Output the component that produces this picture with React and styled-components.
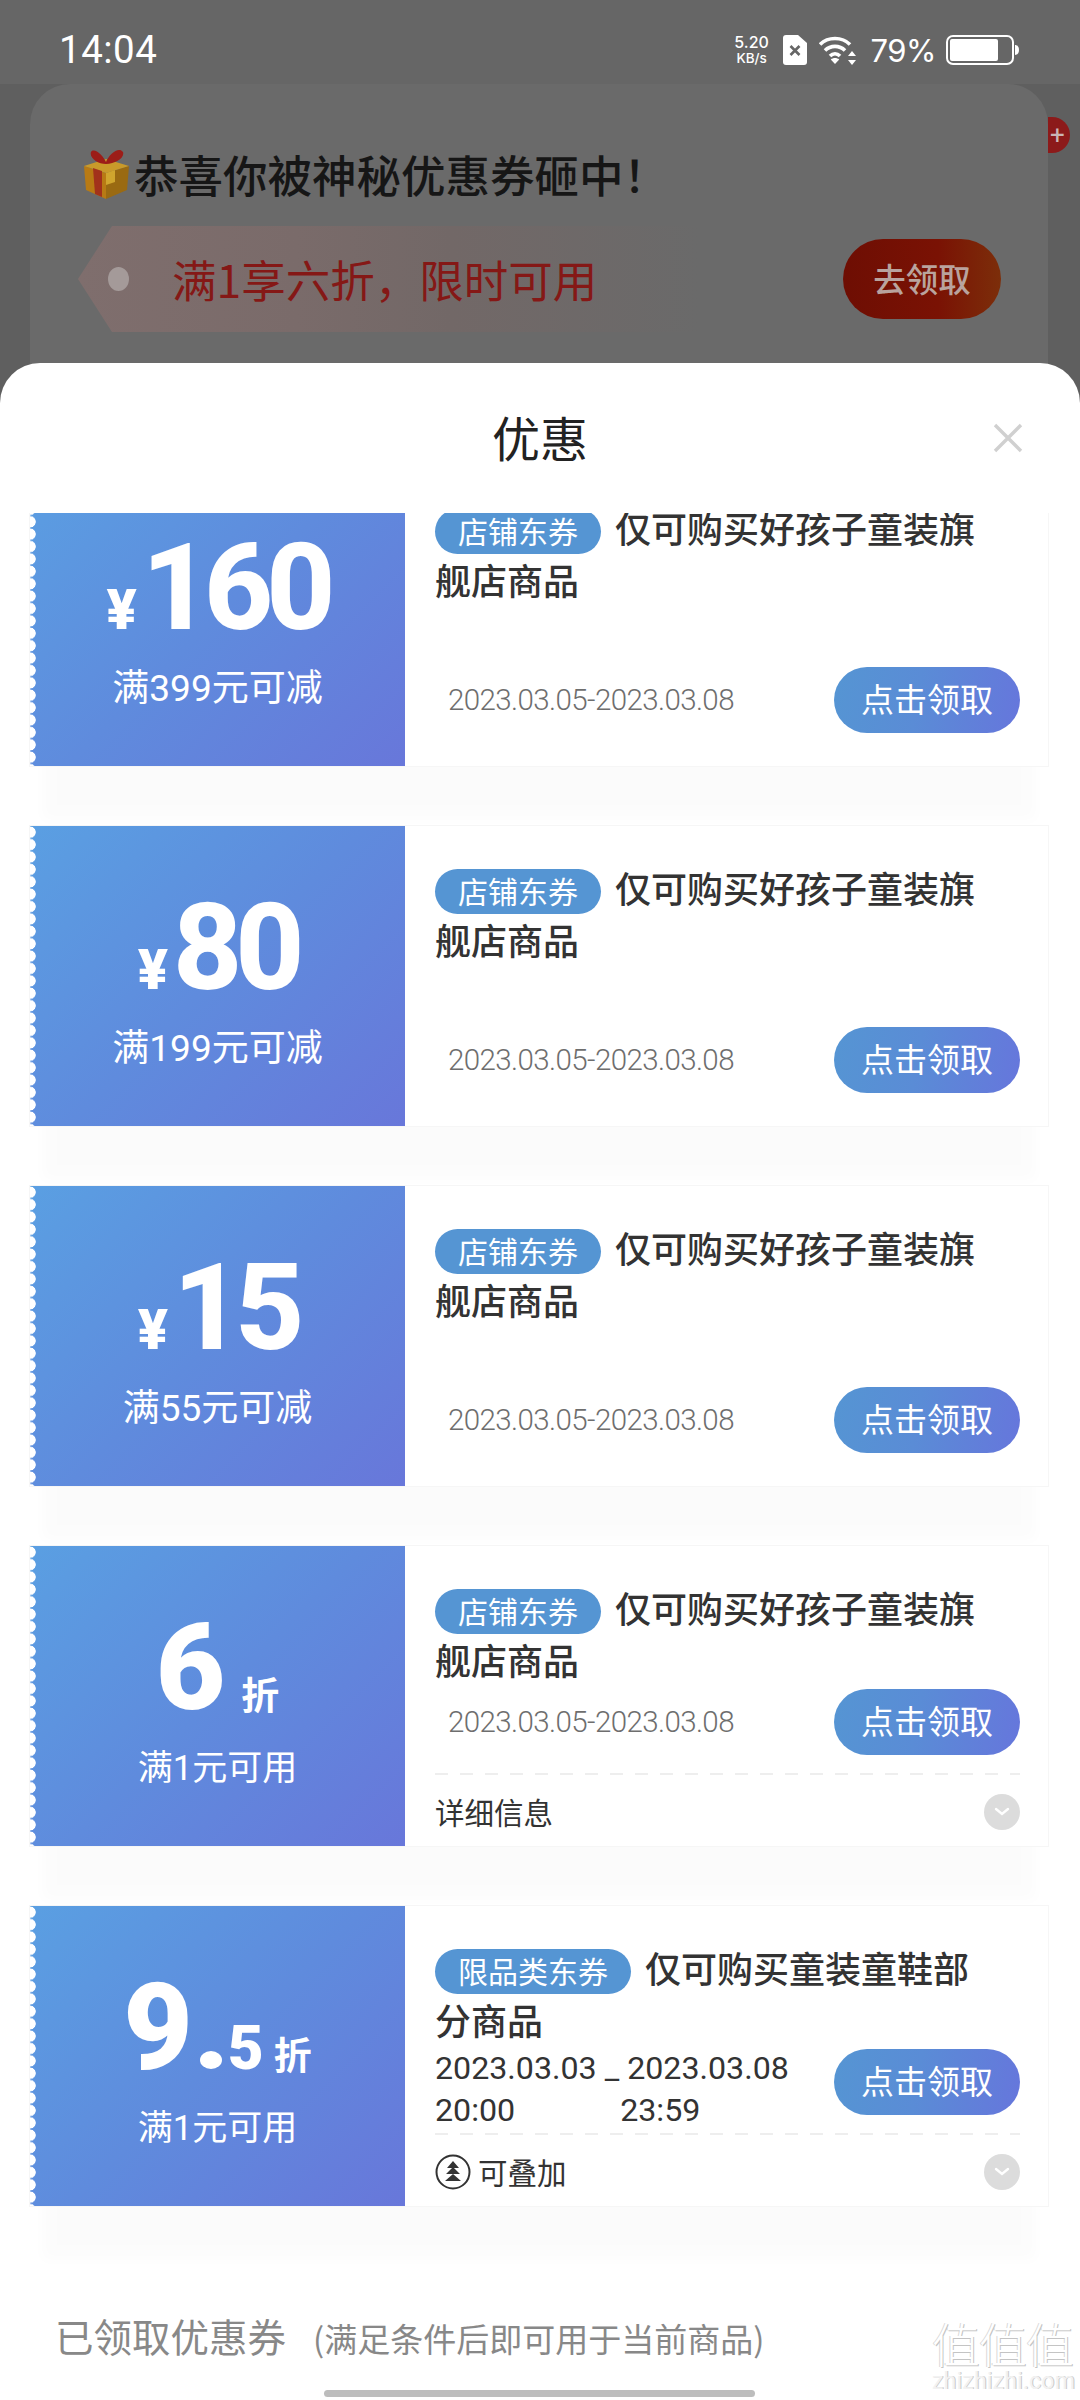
import React from "react";
import styled, { createGlobalStyle } from "styled-components";

const Global = createGlobalStyle`
  html, body { margin: 0; padding: 0; background: #fff; }
  * { box-sizing: border-box; }
  body { font-family: Roboto, "Noto Sans CJK SC", sans-serif; }
`;

const Page = styled.div`
  width: 1080px; height: 2400px; overflow: hidden; display: flex; flex-direction: column;
  position: relative; background: #5f5f5f;
`;
const Backdrop = styled.div`
  flex: 0 0 403px; display: flex; flex-direction: column; background: #5f5f5f;
`;
const StatusBar = styled.div`
  flex: 0 0 84px; display: flex; align-items: center; justify-content: space-between;
  padding: 16px 61px 0 59px; background: #666; color: #fff;
  position: relative; z-index: 1;
`;
const Clock = styled.div`font: 400 38.5px/1 Roboto, sans-serif; letter-spacing: 0.5px;`;
const StatusIcons = styled.div`display: flex; align-items: center;`;
const Speed = styled.div`
  display: flex; flex-direction: column; align-items: center; width: 40px; font-family: Inter, sans-serif;
  font-weight: 500; margin-right: 11px;
  span:first-child { font-size: 16px; line-height: 17px; }
  span:last-child { font-size: 13.5px; line-height: 15px; }
`;
const Percent = styled.div`font: 400 31px/1 Inter, sans-serif; margin: 0 10px 0 14px; letter-spacing: -0.5px;`;
const BackCard = styled.div`
  flex: 1; margin: 0 32px 0 30px; background: #6a6a6a; border-radius: 40px 40px 0 0;
  padding: 64px 0 0 54px; position: relative;
`;
const PlusBadge = styled.div`
  position: absolute; left: 100%; top: 33px; width: 22px; height: 36px; background: #8c1a1a;
  border-radius: 0 18px 18px 0; color: #c9b5b5; font: 400 26px/36px Roboto, sans-serif; padding-left: 2px;
`;
const Headline = styled.div`
  display: flex; align-items: center; height: 52px; font: 500 44.5px/52px "Noto Sans CJK SC", sans-serif; color: #161616;
  svg { margin-right: 5px; }
`;
const Offer = styled.div`display: flex; align-items: center; margin-top: 26px; height: 106px; margin-right: 47px; position: relative;`;
const OfferTag = styled.div`
  flex: 0 0 622px; margin-left: -6px; height: 106px; display: flex; align-items: center; padding-left: 94px;
  background: linear-gradient(90deg, #7f6e6d 0%, #7a6b6a 35%, #726867 60%, #6a6a6a 100%);
  clip-path: polygon(34px 0, 100% 0, 100% 100%, 34px 100%, 0 50%);
  position: relative;
  color: #851816; font: 400 44.5px/1 "Noto Sans CJK SC", sans-serif; white-space: nowrap;
  &::before { content: ""; position: absolute; left: 30px; top: 41px; width: 21px; height: 24px; border-radius: 50%; background: #a49a99; }
`;
const OfferButton = styled.div`
  margin-left: auto; width: 158px; height: 80px; border-radius: 40px;
  background: linear-gradient(90deg, #6e0e03 0%, #7a1204 60%, #7c2e0a 100%);
  color: #b9a39e; font: 500 32.5px/78px "Noto Sans CJK SC", sans-serif; text-align: center;
`;

const Sheet = styled.div`
  flex: 1; margin-top: -40px; background: #fff; border-radius: 40px 40px 0 0; position: relative;
  display: flex; flex-direction: column; min-height: 0;
`;
const SheetHead = styled.div`
  flex: 0 0 150px; display: flex; align-items: center; justify-content: center; position: relative;
  padding-bottom: 5px; font: 400 48px/1 "Noto Sans CJK SC", sans-serif; color: #222;
`;
const Close = styled.svg`position: absolute; right: 57px; top: 60px;`;
const Viewport = styled.div`flex: 1; min-height: 0; overflow: hidden; padding: 0 32px 0 30px;`;
const List = styled.div`display: flex; flex-direction: column; gap: 60px; margin-top: -47px;`;
const Card = styled.div`
  height: 300px; display: grid; grid-template-columns: 375px 1fr; grid-template-rows: 300px; background: #fff;
  box-shadow: 0 0 0 1px #f6f6f6, 0 66px 12px -12px rgba(0,0,0,0.017);
`;
const Stub = styled.div`
  position: relative; background: linear-gradient(135deg, #5a9fe2 0%, #5f8bdd 50%, #6877da 100%);
  display: flex; flex-direction: column; align-items: center; padding-top: 62px; color: #fff;
  &::before {
    content: ""; position: absolute; left: 0; top: 0; bottom: 0; width: 8px;
    background: radial-gradient(circle at 0 50%, #fff 5.4px, transparent 6px) 0 0 / 8px 12.4px repeat-y;
  }
`;
const Amount = styled.div`display: flex; align-items: baseline; height: 120px; line-height: 120px; white-space: nowrap;`;
const Yen = styled.span`font: 900 56px/1 Roboto, sans-serif; margin-right: 5px;`;
const Digits = styled.span`font: 800 120px/120px Roboto, sans-serif; letter-spacing: -7px;`;
const Whole = styled.span`font: 900 120px/120px Roboto, sans-serif;`;
const Dot = styled.span`
  display: inline-block; width: 22px; height: 18px; border-radius: 50%; background: #fff; margin: 0 6px 0 7px;
`;
const Frac = styled.span`font: 900 62px/120px Roboto, sans-serif;`;
const Zhe = styled.span`font: 700 38px/1 "Noto Sans CJK SC", sans-serif; margin-left: ${p => p.$gap}px;`;
const Condition = styled.div`
  margin-top: 19px; font: 400 ${p => p.$size}px/44px Roboto, "Noto Sans CJK SC", sans-serif; white-space: nowrap;
`;
const Body = styled.div`padding: 40px 28px 0 30px; display: flex; flex-direction: column; min-width: 0;`;
const Title = styled.div`
  height: 104px; margin: -5px 0 4px; padding-right: 25px; font: 500 36px/52px "Noto Sans CJK SC", sans-serif; color: #333;
`;
const Tag = styled.span`
  display: inline-block; height: 45px; padding: 0 23px; margin: -6px 14px -6px 0; border-radius: 23px;
  background: #5595d3; color: #fff; font: 400 30px/43px "Noto Sans CJK SC", sans-serif; vertical-align: 0;
`;
const Action = styled.div`
  height: 66px; display: flex; justify-content: space-between; align-items: center;
  margin-top: ${p => (p.$tall ? 58 : 0)}px;
`;
const Date = styled.div`
  margin-left: 13px; padding-top: 2px; font: 300 29.5px/1 Roboto, sans-serif; letter-spacing: -0.6px; color: #6e6e6e; white-space: nowrap;
`;
const DateTwoLine = styled.div`
  align-self: flex-start; margin-top: -2px; font: 400 32.2px/42px Roboto, sans-serif; color: #333; white-space: nowrap;
`;
const TimeEnd = styled.span`margin-left: 105px;`;
const Claim = styled.div`
  flex: 0 0 186px; height: 66px; border-radius: 33px; background: linear-gradient(100deg, #5595d3 0%, #5a8cd6 45%, #6676dc 100%);
  color: #fff; font: 400 33px/62px "Noto Sans CJK SC", sans-serif; text-align: center;
`;
const Foot = styled.div`
  margin-top: 18px; height: 73px; padding-top: 5px; display: flex; align-items: center;
  background: repeating-linear-gradient(90deg, #eeeeee 0 13px, transparent 13px 25px) top / 100% 2px no-repeat;
  font: 400 29.5px/1 "Noto Sans CJK SC", sans-serif; color: #333;
`;
const FootLabel = styled.span`flex: 1; display: flex; align-items: center; gap: 7px;`;
const Expand = styled.span`
  width: 36px; height: 36px; border-radius: 50%; background: #dcdcdc; display: flex; align-items: center; justify-content: center;
`;
const Received = styled.div`
  flex: 0 0 90px; padding: 0 0 0 55px; color: #888; display: flex; align-items: baseline; white-space: nowrap;
  font-family: "Noto Sans CJK SC", sans-serif;
`;
const ReceivedTitle = styled.span`font-size: 38.5px; line-height: 50px; margin-right: 27px;`;
const ReceivedNote = styled.span`font-size: 33px; line-height: 50px;`;
const HomeBar = styled.div`
  position: absolute; left: 324px; bottom: 3px; width: 431px; height: 7px; border-radius: 4px; background: #bdbdbd;
`;
const Watermark = styled.div`
  position: absolute; right: 8px; bottom: 4px; width: 140px; text-align: center; color: #fff;
  font-family: "Noto Sans CJK SC", sans-serif;
`;
const MarkChars = styled.div`
  font-size: 48px; line-height: 52px; font-weight: 300; white-space: nowrap; letter-spacing: -1px;
  text-shadow: 1px 1px 0 #c4c4c4, -1px 0 0 #d8d8d8;
`;
const MarkUrl = styled.div`
  font: 400 23px/28px Roboto, sans-serif; letter-spacing: 0.2px; color: #f2f2f2; text-shadow: 1px 0 0 #c8c8c8;
`;

const SimIcon = () => (
  <svg width="24" height="30" viewBox="0 0 24 30" style={{ marginRight: 12 }}>
    <path d="M3 0H15L24 8V27a3 3 0 0 1-3 3H3a3 3 0 0 1-3-3V3a3 3 0 0 1 3-3Z" fill="#fff" />
    <path d="M7.500 11l9 9M16.500 11l-9 9" stroke="#666" strokeWidth="2.6" />
  </svg>
);
const WifiIcon = () => (
  <svg width="38" height="30" viewBox="0 0 38 30" fill="none">
    <path d="M1 9.500C9 1.500 23 1.500 31 9.500" stroke="#fff" strokeWidth="3.6" />
    <path d="M6 15.500C11.500 10 20.500 10 26 15.500" stroke="#fff" strokeWidth="3.6" />
    <path d="M11 21c3-3 7-3 10 0" stroke="#fff" strokeWidth="3.6" />
    <path d="M16 29l-4.200-4.600c2.400-2 6-2 8.400 0Z" fill="#fff" />
    <path d="M33 16l4 5h-8ZM33 30l4-5h-8Z" fill="#fff" />
  </svg>
);
const BatteryIcon = () => (
  <svg width="73" height="30" viewBox="0 0 73 30" fill="none">
    <rect x="1" y="1" width="66" height="28" rx="6" stroke="#fff" strokeWidth="2" />
    <rect x="4" y="4" width="48" height="22" rx="2" fill="#fff" />
    <path d="M69 10c2.500 0 4 2 4 5s-1.500 5-4 5Z" fill="#fff" />
  </svg>
);
const GiftIcon = () => (
  <svg width="45" height="50" viewBox="0 0 45 50">
    <path d="M0 17 22 24 22 50 2 41Z" fill="#b87a14" />
    <path d="M45 17 22 24 22 50 43 41Z" fill="#9a6a12" />
    <path d="M0 17 22 10 45 17 22 24Z" fill="#c99a2a" />
    <path d="M9 19 18 22 18 48 11 45Z" fill="#a02a1c" opacity=".9" />
    <path d="M22 24 31 21V33L22 36Z" fill="#d0a52e" />
    <path d="M22 15C14 15 5 9 7 3c3-5 12 3 15 10 3-8 13-16 17-10 2 6-8 12-17 12Z" fill="#9c1d18" />
  </svg>
);
const CloseIcon = () => (
  <Close width="30" height="30" viewBox="0 0 30 30">
    <path d="M2 2 28 28M28 2 2 28" stroke="#d0d0d0" strokeWidth="3.4" />
  </Close>
);
const ChevronIcon = () => (
  <svg width="16" height="10" viewBox="0 0 16 10" fill="none">
    <path d="M2 2l6 5 6-5" stroke="#fff" strokeWidth="2.4" strokeLinecap="round" />
  </svg>
);
const StackIcon = () => (
  <svg width="36" height="36" viewBox="0 0 36 36" fill="none">
    <circle cx="18" cy="18" r="16.500" stroke="#333" strokeWidth="2" />
    <path d="M18 7l6 7H12ZM18 13l7 7H11ZM18 20l8 7H10Z" fill="#333" />
  </svg>
);

const storeTitle = "仅可购买好孩子童装旗舰店商品";

const Coupon = ({ value, condition, small, tag = "店铺东券", title = storeTitle, tall, twoLine, label, stack, gap = 16 }) => (
  <Card>
    <Stub>
      <Amount>
        {value.yen ? (
          <>
            <Yen>¥</Yen>
            <Digits>{value.yen}</Digits>
          </>
        ) : (
          <>
            <Whole>{value.whole}</Whole>
            {value.frac && (
              <>
                <Dot />
                <Frac>{value.frac}</Frac>
              </>
            )}
            <Zhe $gap={gap}>折</Zhe>
          </>
        )}
      </Amount>
      <Condition $size={small ? 35 : 37}>{condition}</Condition>
    </Stub>
    <Body>
      <Title>
        <Tag>{tag}</Tag>
        {title}
      </Title>
      <Action $tall={tall}>
        {twoLine ? (
          <DateTwoLine>
            2023.03.03 _ 2023.03.08
            <br />
            20:00<TimeEnd>23:59</TimeEnd>
          </DateTwoLine>
        ) : (
          <Date>2023.03.05-2023.03.08</Date>
        )}
        <Claim>点击领取</Claim>
      </Action>
      {label && (
        <Foot>
          <FootLabel>
            {stack && <StackIcon />}
            {label}
          </FootLabel>
          <Expand>
            <ChevronIcon />
          </Expand>
        </Foot>
      )}
    </Body>
  </Card>
);

export default function App() {
  return (
    <Page>
      <Global />
      <Backdrop>
        <StatusBar>
          <Clock>14:04</Clock>
          <StatusIcons>
            <Speed>
              <span>5.20</span>
              <span>KB/s</span>
            </Speed>
            <SimIcon />
            <WifiIcon />
            <Percent>79%</Percent>
            <BatteryIcon />
          </StatusIcons>
        </StatusBar>
        <BackCard>
          <PlusBadge>+</PlusBadge>
          <Headline>
            <GiftIcon />
            恭喜你被神秘优惠券砸中！
          </Headline>
          <Offer>
            <OfferTag>满1享六折，限时可用</OfferTag>
            <OfferButton>去领取</OfferButton>
          </Offer>
        </BackCard>
      </Backdrop>
      <Sheet>
        <SheetHead>
          优惠
          <CloseIcon />
        </SheetHead>
        <Viewport>
          <List>
            <Coupon value={{ yen: "160" }} condition="满399元可减" tall />
            <Coupon value={{ yen: "80" }} condition="满199元可减" tall />
            <Coupon value={{ yen: "15" }} condition="满55元可减" tall />
            <Coupon value={{ whole: "6" }} condition="满1元可用" small label="详细信息" />
            <Coupon
              value={{ whole: "9", frac: "5" }}
              condition="满1元可用"
              small
              gap={10}
              tag="限品类东券"
              title="仅可购买童装童鞋部分商品"
              twoLine
              label="可叠加"
              stack
            />
          </List>
        </Viewport>
        <Received>
          <ReceivedTitle>已领取优惠券</ReceivedTitle>
          <ReceivedNote>(满足条件后即可用于当前商品)</ReceivedNote>
        </Received>
      </Sheet>
      <Watermark>
        <MarkChars>值值值</MarkChars>
        <MarkUrl>zhizhizhi.com</MarkUrl>
      </Watermark>
      <HomeBar />
    </Page>
  );
}
